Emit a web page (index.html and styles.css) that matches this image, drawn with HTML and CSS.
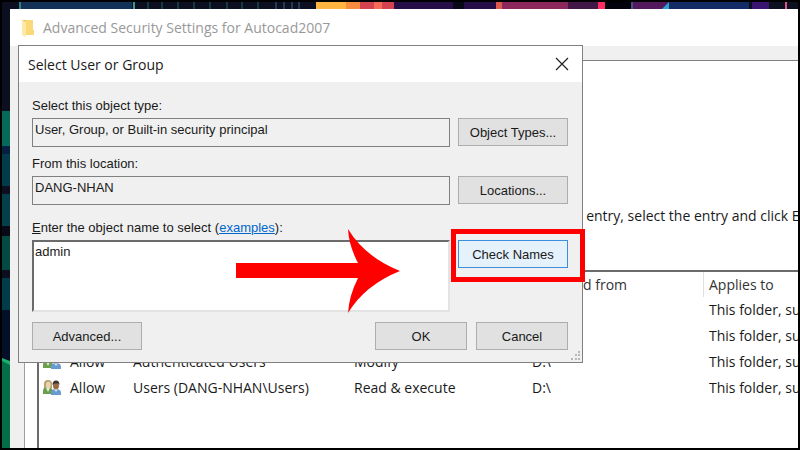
FILE: index.html
```html
<!DOCTYPE html>
<html lang="en">
<head>
    <meta charset="UTF-8">
    <meta name="viewport" content="width=device-width, initial-scale=1.0">
    <title>Advanced Security Settings for Autocad2007</title>
    <link rel="stylesheet" href="styles.css">
</head>
<body>
    <svg width="0" height="0" class="symbols" aria-hidden="true">
        <symbol id="users" viewBox="0 0 18 16">
            <path d="M0 14v-3q0-4 4.500-4t5.500 4v3z" fill="#6a9f4b"/>
            <path d="M3 8l2 4 2-4z" fill="#e4edd8"/>
            <path d="M1 8V4q0-4 4-4t4 4v4z" fill="#b3a36c"/>
            <ellipse cx="5.300" cy="5" rx="2.400" ry="3.200" fill="#efd2b0"/>
            <path d="M8 15v-2q0-4 5-4t5 4v2z" fill="#6a9bd0"/>
            <path d="M11 9l2 3 2-3z" fill="#d9e8f8"/>
            <ellipse cx="13" cy="5.500" rx="3" ry="4" fill="#9a6a48"/>
            <path d="M9.500 5q0-4.500 3.500-4.500t3.500 4.500l-1-1.500h-4z" fill="#3f332c"/>
        </symbol>
    </svg>

    <div class="desktop">
        <svg class="wallpaper" viewBox="0 0 796 446" preserveAspectRatio="none" aria-hidden="true">
            <rect width="796" height="446" fill="#0b0f20"/>
            <rect x="18" width="112" height="8" fill="#133258"/>
            <rect x="17" width="2" height="8" fill="#2f7f80"/>
            <rect x="131" width="2" height="8" fill="#3d9a88"/>
            <path d="M146 0v8M160 0v8M176 0v8M192 0v8M208 0v8M225 0v8M240 0v8M256 0v8" stroke="#24665f"/>
            <path d="M274 0v8M282 0v8M290 0v8M297 0v8" stroke="#35658c"/>
            <rect x="314" width="44" height="8" fill="#ffb640"/>
            <rect x="344" width="16" height="8" fill="#f98b41"/>
            <rect x="358" width="34" height="8" fill="#d4434f"/>
            <rect x="372" width="8" height="8" fill="#f56b57"/>
            <rect x="392" width="102" height="8" fill="#260f48"/>
            <rect x="451" width="11" height="8" fill="#080817"/>
            <rect x="494" width="72" height="8" fill="#8c285c"/>
            <rect x="494" width="6" height="8" fill="#dd5a50"/>
            <rect x="566" width="30" height="8" fill="#421848"/>
            <rect x="596" width="7" height="8" fill="#ff2d62"/>
            <rect x="603" width="28" height="8" fill="#02020c"/>
            <rect x="629" width="38" height="8" fill="#54195c"/>
            <path d="M630 0v8" stroke="#2f8fb0"/>
            <path d="M667 0v8h-8z" fill="#2f9fd0"/>
            <rect x="667" width="80" height="8" fill="#132c68"/>
            <rect x="750" width="17" height="8" fill="#3a1470"/>
            <rect x="783" width="2" height="8" fill="#e0508c"/>
            <rect y="109" width="8" height="35" fill="#056b58"/>
            <rect y="144" width="8" height="8" fill="#052040"/>
            <rect y="152" width="8" height="32" fill="#043b4b"/>
            <rect y="192" width="8" height="32" fill="#05404a"/>
            <rect y="224" width="8" height="10" fill="#080817"/>
            <rect y="234" width="8" height="34" fill="#054a42"/>
            <rect y="276" width="8" height="32" fill="#043b4b"/>
            <rect y="308" width="8" height="49" fill="#041028"/>
            <path d="M0 357l8 4v85H0z" fill="#026f49"/>
            <path d="M0 356l8 3v4l-8-4z" fill="#18b06a"/>
        </svg>

        <section class="window">
            <header class="window-title">
                <svg width="14" height="18" viewBox="0 0 14 18" aria-hidden="true">
                    <path d="M1 1h10v15H1z" fill="#efc35c"/>
                    <path d="M5 1h7v10h1v5H5z" fill="#fbd978"/>
                    <path d="M1 1l4 2v15l-4-2z" fill="#ffe9a6"/>
                </svg>
                <span>Advanced Security Settings for Autocad2007</span>
            </header>
            <div class="tab-page">
                <p class="hint">permission entry, select the entry and click Edit (if available).</p>
                <div class="entries">
                    <table>
                        <colgroup>
                            <col class="col-icon">
                            <col class="col-type">
                            <col class="col-principal">
                            <col class="col-access">
                            <col class="col-inherited">
                            <col class="col-applies">
                        </colgroup>
                        <thead>
                            <tr><th></th><th></th><th></th><th></th><th>Inherited from</th><th>Applies to</th></tr>
                        </thead>
                        <tbody>
                            <tr><td></td><td></td><td></td><td></td><td></td><td>This folder, subfolders and files</td></tr>
                            <tr><td></td><td></td><td></td><td></td><td></td><td>This folder, subfolders and files</td></tr>
                            <tr><td><svg class="users"><use href="#users"/></svg></td><td>Allow</td><td>Authenticated Users</td><td>Modify</td><td>D:\</td><td>This folder, subfolders and files</td></tr>
                            <tr><td><svg class="users"><use href="#users"/></svg></td><td>Allow</td><td>Users (DANG-NHAN\Users)</td><td>Read &amp; execute</td><td>D:\</td><td>This folder, subfolders and files</td></tr>
                        </tbody>
                    </table>
                </div>
            </div>
        </section>

        <section class="dialog" role="dialog" aria-labelledby="dialogTitle">
            <header class="dialog-title">
                <h1 id="dialogTitle">Select User or Group</h1>
                <button type="button" class="close" aria-label="Close">
                    <svg width="14" height="14" viewBox="0 0 14 14"><path d="M1 1l12 12M13 1L1 13" stroke="#222" stroke-width="1.200"/></svg>
                </button>
            </header>
            <form class="dialog-body">
                <label for="objectType">Select this object type:</label>
                <div class="field">
                    <input id="objectType" type="text" value="User, Group, or Built-in security principal" readonly>
                    <button type="button">Object Types...</button>
                </div>
                <label for="location">From this location:</label>
                <div class="field">
                    <input id="location" type="text" value="DANG-NHAN" readonly>
                    <button type="button">Locations...</button>
                </div>
                <div class="name-label">
                    <label for="objectName"><u>E</u>nter the object name to select</label> (<a href="#">examples</a>):
                </div>
                <div class="field">
                    <div class="name-box">
                        <textarea id="objectName">admin</textarea>
                        <svg class="arrow" width="164" height="84" viewBox="0 0 164 84" aria-hidden="true">
                            <path d="M0 34H122Q113 17 112 0Q129 28 164 42Q129 56 112 84Q113 67 122 49H0z" fill="#f00"/>
                        </svg>
                    </div>
                    <div class="check">
                        <button type="button" class="active">Check Names</button>
                        <span class="highlight"></span>
                    </div>
                </div>
                <div class="actions">
                    <button type="button" class="advanced">Advanced...</button>
                    <button type="button">OK</button>
                    <button type="button">Cancel</button>
                </div>
            </form>
            <svg class="grip" width="10" height="10" viewBox="0 0 10 10" aria-hidden="true">
                <path d="M7 0h2v2h-2zM7 3h2v2h-2zM4 3h2v2h-2zM7 7h2v2h-2zM4 7h2v2h-2zM0 7h2v2h-2z" fill="#b8b8b8"/>
            </svg>
        </section>
    </div>
</body>
</html>
```

FILE: styles.css
```css
* {
    box-sizing: border-box;
}

body {
    margin: 0;
    font-family: "Open Sans", "Noto Sans", sans-serif;
    font-size: 14px;
    color: #1a1a1a;
}

.symbols {
    position: absolute;
}

.desktop {
    position: relative;
    height: 100vh;
    border: 2px solid #000;
    overflow: hidden;
}

.wallpaper {
    position: absolute;
    width: 100%;
    height: 100%;
}

/* settings window behind the dialog */
.window {
    position: absolute;
    inset: 7px 0 0 8px;
    display: flex;
    flex-direction: column;
    background-color: #f0f0f0;
    overflow: hidden;
}

.window-title {
    display: flex;
    align-items: center;
    gap: 8px;
    height: 37px;
    padding-left: 11px;
    background-color: #fff;
    color: #999;
}

.tab-page {
    flex: 1;
    margin: 14px 0 0 14px;
    padding-left: 12px;
    border-top: 1px solid #808080;
    border-left: 1px solid #a0a0a0;
    background-color: #fff;
}

.hint {
    margin: 0;
    padding: 143px 0 42px 473px;
    line-height: 24px;
    white-space: nowrap;
}

.entries {
    height: 100%;
    border-top: 2px solid #6b6b6b;
    border-left: 2px solid #6b6b6b;
}

table {
    width: 100%;
    table-layout: fixed;
    border-collapse: collapse;
}

.col-icon {
    width: 31px;
}

.col-type {
    width: 63px;
}

.col-principal {
    width: 221px;
}

.col-access {
    width: 178px;
}

.col-inherited {
    width: 177px;
}

th, td {
    height: 26px;
    padding: 0;
    line-height: 24px;
    font-weight: normal;
    text-align: left;
    white-space: nowrap;
}

th {
    height: 25px;
    color: #333;
}

th:nth-child(5) {
    background: linear-gradient(#e0e0e0, #e0e0e0) 171px 0 / 1px 100% no-repeat;
}

.users {
    display: block;
    width: 18px;
    height: 16px;
    margin-left: 4px;
}

/* select dialog */
.dialog {
    position: absolute;
    top: 43px;
    left: 16px;
    width: 565px;
    border: 1px solid #808080;
    background-color: #f0f0f0;
    font-family: "Liberation Sans", Arial, sans-serif;
    font-size: 13px;
}

.dialog-title {
    display: flex;
    align-items: center;
    justify-content: space-between;
    height: 36px;
    padding: 0 13px 0 9px;
    background-color: #fff;
}

.dialog-title h1 {
    margin: 0;
    font-family: "Open Sans", "Noto Sans", sans-serif;
    font-size: 14px;
    font-weight: normal;
}

.dialog-body {
    padding: 14px 14px 12px 13px;
}

.dialog-body > label,
.name-label {
    display: block;
    padding-bottom: 2px;
    line-height: 20px;
}

.field {
    display: grid;
    grid-template-columns: 1fr 110px;
    gap: 8px;
    margin-bottom: 7px;
}

.dialog-body .name-label {
    padding-top: 6px;
}

.name-label a {
    color: #0066cc;
}

input, textarea, button {
    font-family: inherit;
    font-size: 13px;
    color: inherit;
}

input {
    height: 29px;
    padding: 0 2px 6px;
    border: 1px solid #808080;
    background-color: #f0f0f0;
}

.name-box {
    position: relative;
}

textarea {
    display: block;
    width: 100%;
    height: 72px;
    padding: 2px 1px;
    border: 2px solid #6b6b6b;
    border-right-color: #e3e3e3;
    border-bottom-color: #e3e3e3;
    background-color: #fff;
    resize: none;
}

button {
    height: 28px;
    padding: 0;
    border: 1px solid #adadad;
    background-color: #e1e1e1;
}

.active {
    width: 100%;
    border-color: #3c8fdc;
    background-color: #e5f1fb;
}

.close {
    display: flex;
    border: none;
    background-color: transparent;
    align-items: center;
}

.actions {
    display: flex;
    gap: 9px;
    padding-top: 3px;
}

.actions button {
    width: 92px;
}

.actions .advanced {
    width: 110px;
    margin-right: auto;
}

.grip {
    position: absolute;
    right: 1px;
    bottom: 1px;
}

/* pointers laid over the dialog */
.arrow {
    position: absolute;
    top: -11px;
    left: 204px;
}

.check {
    position: relative;
}

.highlight {
    position: absolute;
    inset: -11px -17px auto -7px;
    height: 53px;
    border: 5px solid #f00;
    pointer-events: none;
}
```
